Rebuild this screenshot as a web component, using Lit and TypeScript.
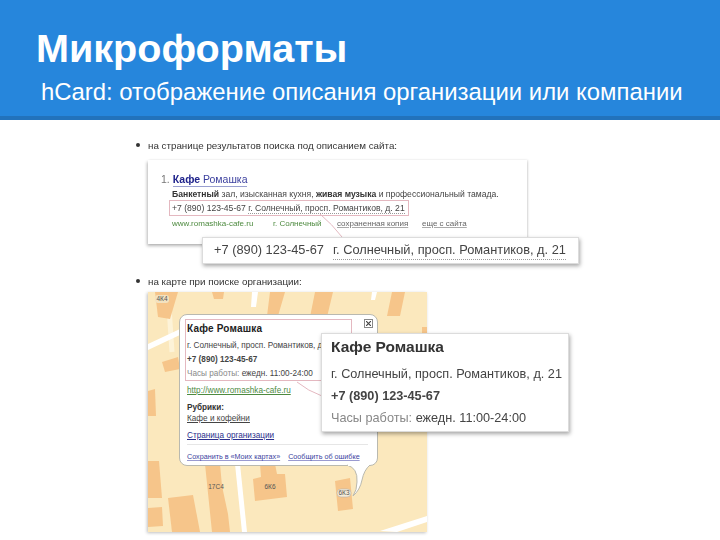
import { LitElement, html, css, svg } from 'lit';
import { customElement } from 'lit/decorators.js';

// map blocks, in map coordinates (map box starts at 148,293 on the page)
const BLOCKS = [
	'7,0 30,0 22,27 10,25',
	'64,0 76,0 75,7 66,7',
	'122,0 137,0 130,24 119,24',
	'167,0 185,0 179,25 162,25',
	'244,0 257,0 252,24 239,24',
	'14,70 30,65 32,77 17,80',
	'0,99 7,97 8,124 0,124',
	'0,169 11,169 14,206 0,206',
	'0,216 14,215 15,234 0,235',
	'20,206 45,203 52,240 24,240',
	'57,172 72,172 74,194 80,222 82,240 64,240',
	'112,172 127,172 129,182 137,182 139,205 107,209 105,187 113,185',
	'187,189 202,186 205,217 190,219',
	'274,35 279,35 279,50 274,50',
];

const ROADS = [
	'104,0 110,0 108,15 103,15',
	'224,0 229,0 227,8 223,8',
	'0,52 32,37 34,42 0,58',
	'87,172 92,172 99,240 94,240',
	'232,239 279,224 279,230 249,240',
];

const LABELS = [
	['4К4', 14, 9],
	['17С4', 68, 197],
	['6К6', 122, 197],
	['6К3', 196, 203],
];

@customElement('app-root')
export class AppRoot extends LitElement {
	static styles = css`:host {
		display: block;
		width: 720px;
		height: 540px;
		position: relative;
		overflow: hidden;
		background: #fff;
		font-family: "Liberation Sans", Arial, sans-serif;
		color: #333;
	}

	header {
		height: 120px;
		box-sizing: border-box;
		padding: 26px 0 0 36px;
		background: #2686dc;
		border-bottom: 4px solid #2272bb;
		color: #fff;
	}

	h1 {
		margin: 0;
		font-size: 39.6px;
		line-height: 44px;
		font-weight: bold;
	}

	h2 {
		margin: 8px 0 0 5px;
		font-size: 23.9px;
		line-height: 28px;
		font-weight: normal;
		white-space: nowrap;
	}

	main {
		padding: 19px 0 0 135px;
		filter: blur(0.4px);
	}

	.bullet {
		display: flex;
		align-items: center;
		gap: 8px;
		height: 12px;
		font-size: 9.8px;
		color: #333;
	}

	.bullet::before {
		content: '';
		width: 4px;
		height: 4px;
		border-radius: 50%;
		background: #333;
		margin-left: 1px;
	}

	.result {
		width: 379px;
		height: 84px;
		box-sizing: border-box;
		margin: 9px 0 31px 13px;
		padding: 13px 0 0 13px;
		box-shadow: -1px 2px 3px rgba(0, 0, 0, 0.28), 1px 0 2px rgba(0, 0, 0, 0.12);
		color: #444;
	}

	.result-title {
		display: flex;
		gap: 3px;
		align-items: baseline;
		font-size: 10.5px;
		line-height: 13px;
		color: #777;
		margin-bottom: 1px;
	}

	.result-title a {
		color: #3b3f9e;
		border-bottom: 1px solid #9aa0d0;
	}

	.result-title b {
		color: #20248c;
	}

	.desc {
		line-height: 12px;
		white-space: nowrap;
		padding-left: 11px;
		font-size: 8.6px;
	}

	.desc b {
		color: #333;
	}

	.phone {
		width: 236px;
		height: 14px;
		line-height: 14px;
		margin: 0 0 0 8px;
		padding-left: 2px;
		border: 1px solid #e4b8c0;
		white-space: nowrap;
		font-size: 8.6px;
	}

	.dotted {
		border-bottom: 1px dotted #999;
	}

	.links {
		display: flex;
		margin: 2px 0 0 11px;
		font-size: 8px;
		line-height: 12px;
		white-space: nowrap;
		color: #666;
	}

	.links .url {
		color: #4d8a3f;
		width: 101px;
	}

	.links .city {
		color: #4d8a3f;
		width: 64px;
	}

	.links .copy {
		width: 85px;
	}

	.links u {
		text-decoration-color: #aaa;
	}

	.map {
		position: relative;
		width: 279px;
		height: 240px;
		margin: 5px 0 0 13px;
		box-shadow: -1px 1px 3px rgba(0, 0, 0, 0.25);
	}

	.map > svg {
		position: absolute;
		left: 0;
		top: 0;
		overflow: visible;
	}

	.map-label {
		font-size: 6.5px;
		fill: #555;
		text-anchor: middle;
		font-family: "Liberation Sans", Arial, sans-serif;
	}

	.popup {
		position: absolute;
		left: 31px;
		top: 22px;
		width: 199px;
		height: 152px;
		box-sizing: border-box;
		padding: 4px 0 0 5px;
		background: #fff;
		border: 1px solid #b9b9b0;
		border-radius: 8px;
		font-size: 8.2px;
		color: #444;
	}

	.popup-card {
		width: 167px;
		height: 62px;
		box-sizing: border-box;
		padding: 1px 0 0 1px;
		border: 1px solid #e4b8c0;
		white-space: nowrap;
		overflow: hidden;
		line-height: 14px;
	}

	.popup-card strong {
		display: block;
		font-size: 10px;
		line-height: 15px;
		color: #222;
		letter-spacing: 0.2px;
	}

	.popup-card .line {
		display: block;
		margin-top: 3px;
		line-height: 14px;
	}

	.popup-card .tight {
		display: block;
		line-height: 14px;
	}

	.close {
		position: absolute;
		right: 4px;
		top: 4px;
		width: 7px;
		height: 7px;
		border: 1px solid #888;
		display: grid;
		place-items: center;
	}

	.site {
		margin: 4px 0 0 2px;
		color: #4d8a3f;
		text-decoration: underline;
		line-height: 11px;
	}

	.popup-sec {
		margin: 6px 0 0 2px;
		font-weight: bold;
		line-height: 11px;
		color: #333;
	}

	.popup-link {
		margin-left: 2px;
		line-height: 11px;
		text-decoration: underline;
		color: #444;
	}

	.org {
		margin: 6px 0 0 2px;
		line-height: 11px;
		text-decoration: underline;
		color: #2b2f8c;
	}

	.popup-foot {
		display: flex;
		gap: 8px;
		margin: 3px 9px 0 2px;
		padding-top: 7px;
		border-top: 1px solid #e6e6e6;
		font-size: 7.2px;
		line-height: 10px;
		color: #3b3fa0;
		white-space: nowrap;
	}

	.popup-foot u {
		text-decoration-color: #9a9ad0;
	}

	.callout {
		position: absolute;
		box-sizing: border-box;
		background: #fff;
		border: 1px solid #dcdcdc;
		box-shadow: 1px 2px 4px rgba(0, 0, 0, 0.35);
		white-space: nowrap;
		color: #444;
		filter: blur(0.3px);
	}

	.callout-phone {
		display: flex;
		align-items: flex-start;
		gap: 9px;
		left: 202px;
		top: 237px;
		width: 377px;
		height: 27px;
		padding: 3px 0 0 11px;
		font-size: 12.8px;
		line-height: 18px;
	}

	.callout-map {
		left: 321px;
		top: 333px;
		width: 248px;
		height: 99px;
		padding: 2px 0 0 9px;
		font-size: 12.7px;
	}

	.callout-map strong {
		display: block;
		font-size: 15.5px;
		line-height: 22px;
		color: #333;
		margin-bottom: 5px;
	}

	.callout-map div {
		line-height: 22px;
	}

	.hours {
		color: #888;
	}

	.hours span {
		color: #444;
	}

	.leader {
		position: absolute;
		left: 0;
		top: 0;
		pointer-events: none;
	}
	`;

	render() {
		return html`
			<header>
				<h1>Микроформаты</h1>
				<h2>hCard: отображение описания организации или компании</h2>
			</header>
			<main>
				<div class="bullet">на странице результатов поиска под описанием сайта:</div>
				<div class="result">
					<div class="result-title">1. <a><b>Кафе</b> Ромашка</a></div>
					<div class="desc"><b>Банкетный</b> зал, изысканная кухня, <b>живая музыка</b> и профессиональный тамада.</div>
					<div class="phone">+7 (890) 123-45-67 <span class="dotted">г. Солнечный, просп. Романтиков, д. 21</span></div>
					<div class="links">
						<span class="url">www.romashka-cafe.ru</span>
						<span class="city">г. Солнечный</span>
						<span class="copy"><u>сохраненная копия</u></span>
						<span><u>еще с сайта</u></span>
					</div>
				</div>
				<div class="bullet">на карте при поиске организации:</div>
				<div class="map">
					${this.renderMap()}
					<div class="popup">
						<div class="popup-card">
							<strong>Кафе Ромашка</strong>
							<span class="line">г. Солнечный, просп. Романтиков, д. 21</span>
							<span class="tight"><b>+7 (890) 123-45-67</b></span>
							<span class="tight hours">Часы работы: <span>ежедн. 11:00-24:00</span></span>
						</div>
						<div class="close">
							<svg width="5" height="5" viewBox="0 0 5 5"><path d="M0 0L5 5M5 0L0 5" stroke="#444" stroke-width="1.2"/></svg>
						</div>
						<div class="site">http://www.romashka-cafe.ru</div>
						<div class="popup-sec">Рубрики:</div>
						<div class="popup-link">Кафе и кофейни</div>
						<div class="org">Страница организации</div>
						<div class="popup-foot"><u>Сохранить в «Моих картах»</u><u>Сообщить об ошибке</u></div>
					</div>
					<svg class="tail" width="279" height="240" viewBox="0 0 279 240">
						<path d="M199 173Q210 176 209 190Q209 198 205 204Q212 198 214 188Q216 178 222 173" fill="#fff" stroke="#b9b9b0"/>
						<rect x="200" y="171" width="21" height="3" fill="#fff"/>
					</svg>
				</div>
			</main>
			<svg class="leader" width="720" height="540" viewBox="0 0 720 540" fill="none" stroke="#e4b8c0">
				<path d="M320 214Q332 224 342 237"/>
				<path d="M297 382Q308 391 322 396"/>
			</svg>
			<div class="callout callout-phone"><span>+7 (890) 123-45-67</span><span class="dotted">г. Солнечный, просп. Романтиков, д. 21</span></div>
			<div class="callout callout-map">
				<strong>Кафе Ромашка</strong>
				<div>г. Солнечный, просп. Романтиков, д. 21</div>
				<div><b>+7 (890) 123-45-67</b></div>
				<div class="hours">Часы работы: <span>ежедн. 11:00-24:00</span></div>
			</div>
		`;
	}

	renderMap() {
		return html`<svg width="279" height="240" viewBox="0 0 279 240">
			<rect width="279" height="240" fill="#fbe8bd"/>
			${svg`<path d="M20 0L24 60" stroke="#fdf3d8" stroke-width="5" fill="none"/>`}
			${BLOCKS.map((p) => svg`<polygon points=${p} fill="#f6c58a"/>`)}
			${ROADS.map((p) => svg`<polygon points=${p} fill="#fff"/>`)}
			<rect x="7" y="3" width="14" height="8" rx="3" fill="#f3e2c0"/>
			<rect x="189" y="197" width="14" height="8" rx="4" fill="#f5ecd8" stroke="#aaa" stroke-width="0.5"/>
			${LABELS.map(([t, x, y]) => svg`<text class="map-label" x=${x} y=${y}>${t}</text>`)}
		</svg>`;
	}
}

declare global {
	interface HTMLElementTagNameMap {
		'app-root': AppRoot,
	}
}
